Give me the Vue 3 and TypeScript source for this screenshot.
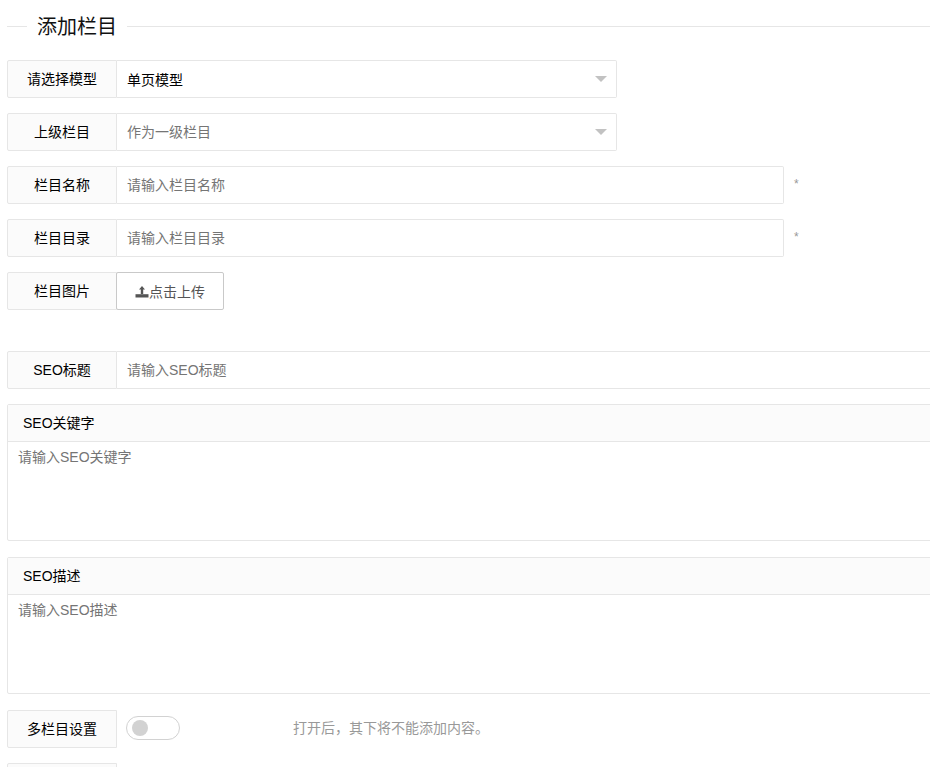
<script setup lang="ts">
interface InputRow { label: string; placeholder: string; }
const required: InputRow[] = [
  { label: '栏目名称', placeholder: '请输入栏目名称' },
  { label: '栏目目录', placeholder: '请输入栏目目录' },
];
const areas: InputRow[] = [
  { label: 'SEO关键字', placeholder: '请输入SEO关键字' },
  { label: 'SEO描述', placeholder: '请输入SEO描述' },
];
</script>

<template>
  <div class="page">
    <div class="title">
      <span class="title-text">添加栏目</span>
    </div>

    <div class="row">
      <label class="label">请选择模型</label>
      <div class="control select">
        <span class="value">单页模型</span>
        <i class="caret"></i>
      </div>
    </div>
    <div class="row">
      <label class="label">上级栏目</label>
      <div class="control select">
        <span class="hint">作为一级栏目</span>
        <i class="caret"></i>
      </div>
    </div>

    <div v-for="r in required" :key="r.label" class="row">
      <label class="label">{{ r.label }}</label>
      <div class="control medium"><span class="hint">{{ r.placeholder }}</span></div>
      <span class="star">*</span>
    </div>

    <div class="row upload-row">
      <label class="label">栏目图片</label>
      <button class="upload" type="button">
        <svg class="upload-icon" viewBox="0 0 14 12" width="14" height="12">
          <path d="M7 0 L10 3.4 H8.2 V8 H5.8 V3.4 H4 Z" fill="#555" />
          <path d="M0.5 8.2 H13.5 V11.5 H0.5 Z" fill="#555" />
        </svg>点击上传
      </button>
    </div>

    <div class="row">
      <label class="label">SEO标题</label>
      <div class="control full"><span class="hint">请输入SEO标题</span></div>
    </div>

    <div v-for="a in areas" :key="a.label" class="area">
      <div class="area-head">{{ a.label }}</div>
      <div class="area-body">{{ a.placeholder }}</div>
    </div>

    <div class="row switch-row">
      <label class="label">多栏目设置</label>
      <div class="switch"><i class="knob"></i></div>
      <span class="note">打开后，其下将不能添加内容。</span>
    </div>
    <div class="row">
      <label class="label"></label>
    </div>
  </div>
</template>

<style scoped>
.page {
  box-sizing: border-box;
  width: 1000px;
  padding: 0 0 0 7px;
  font-family: "Liberation Sans", "Noto Sans CJK SC", sans-serif;
  font-size: 14px;
  color: #000;
}
.title {
  height: 60px;
  position: relative;
  box-sizing: border-box;
  padding: 12px 0 0 20px;
}
.title::before {
  content: "";
  position: absolute;
  left: 0;
  right: 0;
  top: 26px;
  border-top: 1px solid #e6e6e6;
}
.title-text {
  position: relative;
  display: inline-block;
  background: #fff;
  padding: 0 10px;
  font-size: 20px;
  line-height: 30px;
  color: #111;
}
.row {
  display: flex;
  align-items: flex-start;
  height: 38px;
  margin-bottom: 15px;
}
.upload-row { margin-bottom: 41px; }
.switch-row { align-items: flex-start; }
.label {
  box-sizing: border-box;
  flex: none;
  width: 110px;
  height: 38px;
  line-height: 36px;
  text-align: center;
  border: 1px solid #e6e6e6;
  border-radius: 2px 0 0 2px;
  background: #fbfbfb;
  color: #000;
}
.control {
  box-sizing: border-box;
  height: 38px;
  line-height: 36px;
  padding-left: 10px;
  border: 1px solid #e6e6e6;
  border-left: 0;
  border-radius: 0 2px 2px 0;
  background: #fff;
  position: relative;
}
.select { width: 500px; }
.medium { width: 667px; }
.full { flex: 1; }
.value { color: #000; display: inline-block; line-height: 38px; vertical-align: top; }
.hint { color: #757575; }
.caret {
  position: absolute;
  right: 9px;
  top: 15px;
  border-style: solid;
  border-width: 6px 6px 0;
  border-color: #c2c2c2 transparent transparent;
}
.star {
  margin-left: 10px;
  line-height: 37px;
  color: #999;
  font-size: 12px;
}
.upload {
  box-sizing: border-box;
  width: 108px;
  height: 38px;
  padding: 0;
  margin-left: -1px;
  border: 1px solid #c9c9c9;
  border-radius: 2px;
  background: #fff;
  color: #555;
  font: inherit;
  display: flex;
  align-items: center;
  justify-content: center;
}
.upload-icon { flex: none; margin-top: 1px; }
.area {
  box-sizing: border-box;
  height: 137px;
  margin-bottom: 16px;
  border: 1px solid #e6e6e6;
  border-radius: 2px;
}
.area-head {
  box-sizing: border-box;
  height: 37px;
  line-height: 37px;
  padding-left: 15px;
  background: #fbfbfb;
  border-bottom: 1px solid #e6e6e6;
}
.area-body {
  padding: 5px 10px;
  line-height: 20px;
  color: #757575;
}
.switch {
  box-sizing: border-box;
  flex: none;
  position: relative;
  width: 54px;
  height: 24px;
  margin: 6px 0 0 9px;
  border: 1px solid #d2d2d2;
  border-radius: 20px;
  background: #fff;
}
.knob {
  position: absolute;
  left: 5px;
  top: 3px;
  width: 16px;
  height: 16px;
  border-radius: 50%;
  background: #d2d2d2;
}
.note {
  margin-left: 113px;
  line-height: 36px;
  color: #999;
}
</style>

<style>
html, body { margin: 0; height: 100%; overflow: hidden; background: #fff; }
</style>
